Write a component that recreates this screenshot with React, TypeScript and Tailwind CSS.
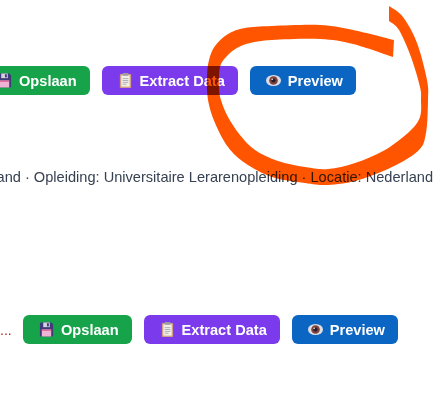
import React from 'react';

const outer = [[394,40],[353,30],[320,25],[272,26],[245,28],[228,34],[215,46],[209,60],[207,77],[208,100],[215,123],[228,147],[245,163],[272,177],[305,183],[328,185],[355,181],[388,169],[418,151],[426,133],[428,100],[427,80],[417,43],[403,17],[389,6]];
const inner = [[389,21],[399,30],[411,57],[420,87],[421,100],[420,117],[410,131],[385,150],[355,163],[328,169],[305,167],[278,161],[255,150],[240,135],[228,117],[221,100],[219,87],[220,67],[227,56],[237,48],[250,43],[272,40],[320,39],[353,44],[393,57]];

// catmull-rom through the points, so the stroke keeps its measured width
const curve = (pts: number[][]) => {
  let d = '';
  for (let i = 0; i < pts.length - 1; i++) {
    const p0 = pts[Math.max(i - 1, 0)];
    const p1 = pts[i];
    const p2 = pts[i + 1];
    const p3 = pts[Math.min(i + 2, pts.length - 1)];
    const c1x = p1[0] + (p2[0] - p0[0]) / 6;
    const c1y = p1[1] + (p2[1] - p0[1]) / 6;
    const c2x = p2[0] - (p3[0] - p1[0]) / 6;
    const c2y = p2[1] - (p3[1] - p1[1]) / 6;
    d += ` C${c1x} ${c1y} ${c2x} ${c2y} ${p2[0]} ${p2[1]}`;
  }
  return d;
};

const scribble = `M${outer[0][0]} ${outer[0][1]}${curve(outer)} L${inner[0][0]} ${inner[0][1]}${curve(inner)} Z`;

const Floppy = () => (
  <svg width="15" height="15" viewBox="0 0 16 15" className="shrink-0">
    <path d="M1 1.500C1 .7 1.700 0 2.500 0H13l2 2v11.500c0 .8-.7 1.500-1.500 1.500h-11C1.700 15 1 14.300 1 13.500Z" fill="#40397a" />
    <rect x="4.500" y="0" width="7" height="5" fill="#d4d2e0" />
    <rect x="8.500" y="0.800" width="2" height="3.400" fill="#40397a" />
    <rect x="3" y="7.500" width="10" height="7.500" fill="#eeb4d4" />
    <rect x="3" y="7.500" width="10" height="1.500" fill="#e06a9a" />
  </svg>
);

const Clipboard = () => (
  <svg width="15" height="15" viewBox="0 0 15 16" className="shrink-0">
    <rect x="1.500" y="1" width="12" height="15" rx="1" fill="#cf9f82" />
    <rect x="3" y="2.500" width="9" height="12" fill="#f3eee8" />
    <rect x="4.500" y="0" width="6" height="3" rx="0.500" fill="#9a9ca6" />
    <path d="M4.500 6h6M4.500 8h6M4.500 10h6M4.500 12h4" stroke="#a9aeb6" strokeWidth="1" />
  </svg>
);

const Eye = () => (
  <svg width="15" height="15" viewBox="0 0 15 15" className="shrink-0">
    <ellipse cx="7.500" cy="7.500" rx="7.500" ry="5.500" fill="#dedde2" />
    <circle cx="7.500" cy="7.500" r="4.300" fill="#7c4340" />
    <circle cx="7.500" cy="7.500" r="2.100" fill="#2e1c24" />
    <circle cx="6.200" cy="6.200" r="0.800" fill="#f5eeee" />
  </svg>
);

const Btn = ({ bg, icon, label }: { bg: string; icon: React.ReactNode; label: string }) => (
  <button className={`${bg} h-[29px] rounded-md pl-4 pr-[13.5px] flex items-center gap-[7px] text-white text-[14.6px] font-bold whitespace-nowrap shrink-0`}>
    {icon}
    <span className="pt-[2px]">{label}</span>
  </button>
);

const Actions = () => (
  <>
    <Btn bg="bg-[#16a34a]" icon={<Floppy />} label="Opslaan" />
    <Btn bg="bg-[#7c3aed] ml-[11.5px]" icon={<Clipboard />} label="Extract Data" />
    <Btn bg="bg-[#0a66c2] ml-[11.5px]" icon={<Eye />} label="Preview" />
  </>
);

const App: React.FC = () => {
  return (
    <div className="relative w-[437px] h-[401px] overflow-hidden bg-white font-['Liberation_Sans',Arial,sans-serif]">
      <div className="flex items-center ml-[-19px] mt-[66px]">
        <Actions />
      </div>

      <div className="flex justify-end pr-1 mt-[73px] h-5 items-center whitespace-nowrap text-[14.6px] text-[#374151]">
        Land: Nederland · Opleiding: Universitaire Lerarenopleiding · Locatie: Nederland
      </div>

      <div className="flex items-center mt-[127px]">
        <span className="w-[23px] shrink-0 text-sm text-[#b91c1c]">...</span>
        <Actions />
      </div>

      <svg viewBox="0 0 437 401" className="absolute inset-0 w-[437px] h-[401px] mix-blend-multiply pointer-events-none">
        <path d={scribble} fill="#ff5500" />
      </svg>
    </div>
  );
};

export default App;
